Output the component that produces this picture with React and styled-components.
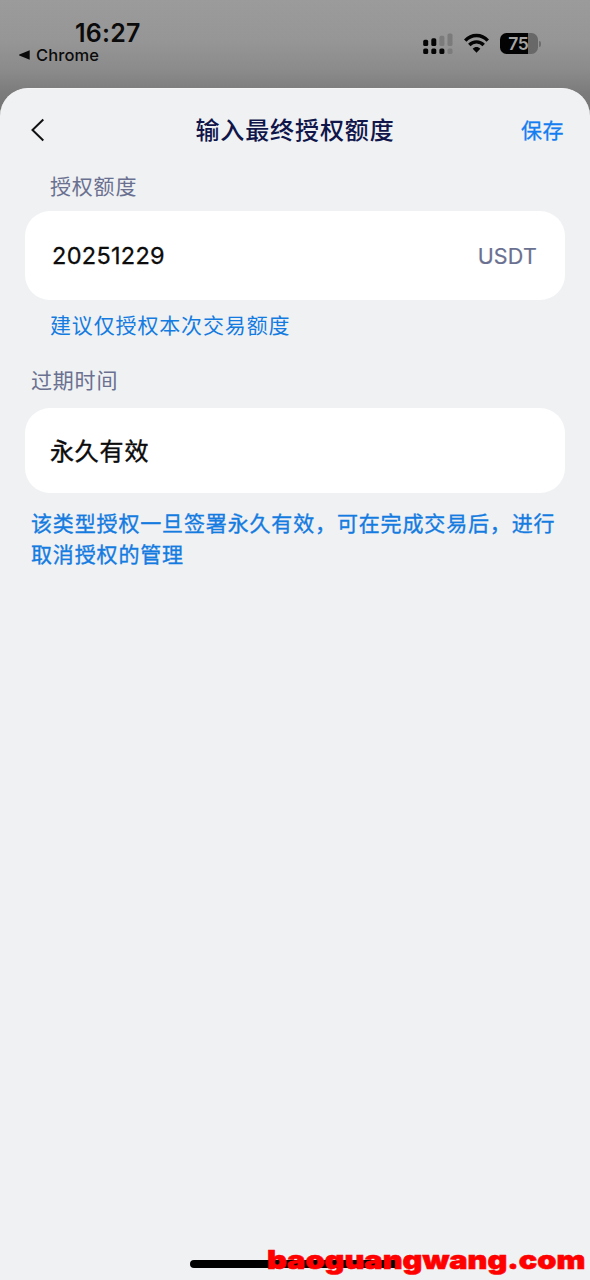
import styled, { createGlobalStyle } from "styled-components";

const GlobalStyle = createGlobalStyle`
  * {
    box-sizing: border-box;
  }

  body {
    margin: 0;
    background: #848484;
    font-family: Inter, "Noto Sans CJK SC", sans-serif;
  }
`;

const Screen = styled.div`
  position: relative;
  width: 590px;
  height: 1280px;
  display: flex;
  flex-direction: column;
  overflow: hidden;
  background: linear-gradient(#9b9b9b 0, #969696 40px, #8b8b8b 70px, #7c7c7c 92px, #707070 120px);
`;

const StatusBar = styled.div`
  height: 88px;
  flex: none;
  display: flex;
  justify-content: space-between;
  padding: 18px 49px 0 19px;
`;

const TimeBlock = styled.div`
  display: flex;
  flex-direction: column;
  color: #0b0b0b;
`;

const Time = styled.div`
  padding-left: 56px;
  font-size: 25px;
  line-height: 30px;
  font-weight: 600;
  letter-spacing: 0.2px;
`;

const BackToApp = styled.div`
  display: flex;
  align-items: center;
  gap: 6px;
  margin-top: -1px;
  font-size: 16.5px;
  line-height: 16px;
  font-weight: 500;
  letter-spacing: 0.1px;
`;

const StatusIcons = styled.div`
  display: flex;
  align-items: flex-start;
  padding-top: 15px;
`;

const Battery = styled.div`
  display: flex;
  align-items: center;
  margin-left: 11px;
`;

const BatteryBody = styled.div`
  width: 38px;
  height: 21px;
  border-radius: 6.5px;
  background: linear-gradient(to right, #030303 28px, #686868 28px);
  color: #a5a5a5;
  font-size: 17.5px;
  line-height: 21px;
  font-weight: 600;
  text-align: center;
  letter-spacing: -0.5px;
  text-indent: -1.5px;
`;

const BatteryTip = styled.div`
  width: 2px;
  height: 6px;
  margin-left: 1px;
  border-radius: 0 2px 2px 0;
  background: #6d6d6d;
`;

const Sheet = styled.div`
  flex: 1;
  padding: 0 25px;
  border-radius: 28px 28px 0 0;
  background: #eff1f3;
  border-top: 1px solid #f6f6f7;
`;

const Header = styled.div`
  height: 83px;
  display: grid;
  grid-template-columns: 80px 1fr 80px;
  align-items: center;
`;

const BackButton = styled.button`
  display: flex;
  padding: 0 0 2px 5px;
  border: 0;
  background: none;
`;

const Title = styled.div`
  text-align: center;
  font-size: 24px;
  line-height: 30px;
  font-weight: 500;
  letter-spacing: 0.9px;
  color: #10154a;
`;

const SaveButton = styled.button`
  padding: 0 1px 0 0;
  border: 0;
  background: none;
  text-align: right;
  font-family: inherit;
  font-size: 21px;
  line-height: 30px;
  font-weight: 400;
  -webkit-text-stroke: 0.3px;
  letter-spacing: 0.5px;
  color: #147df0;
`;

const Label = styled.div`
  padding-left: ${(props) => (props.$inset ? 25 : 6)}px;
  font-size: 21px;
  line-height: 30px;
  letter-spacing: 0.8px;
  color: #6a7090;
`;

const Card = styled.div`
  height: ${(props) => props.$height}px;
  display: flex;
  align-items: center;
  justify-content: space-between;
  margin-top: ${(props) => props.$top}px;
  padding: 0 28px 0 25px;
  border-radius: 25px;
  background: #fff;
  color: #0c0c0c;
`;

const Amount = styled.div`
  padding-left: 2px;
  font-size: 23.5px;
  font-weight: 400;
  -webkit-text-stroke: 0.3px;
  letter-spacing: 0.3px;
`;

const Unit = styled.div`
  font-size: 21.5px;
  font-weight: 400;
  -webkit-text-stroke: 0.2px;
  letter-spacing: 0.2px;
  color: #6a7090;
`;

const Expiry = styled.div`
  padding-bottom: 2px;
  font-size: 24px;
  font-weight: 400;
  -webkit-text-stroke: 0.4px;
  letter-spacing: 0.8px;
`;

const Hint = styled.div`
  margin: ${(props) => props.$margin};
  padding-left: ${(props) => (props.$inset ? 25 : 6)}px;
  font-size: 21px;
  line-height: 31px;
  -webkit-text-stroke: ${(props) => (props.$inset ? 0 : 0.35)}px;
  letter-spacing: 0.85px;
  white-space: nowrap;
  color: #147be0;
`;

const HomeIndicator = styled.div`
  position: absolute;
  left: 190px;
  bottom: 12px;
  width: 210px;
  height: 8px;
  border-radius: 4px;
  background: #000;
`;

const Watermark = styled.div`
  position: absolute;
  left: 267px;
  bottom: 5px;
  font-size: 26px;
  line-height: 30px;
  font-weight: 900;
  color: #fe0000;
  -webkit-text-stroke: 0.6px #fe0000;
  white-space: nowrap;
  transform: scaleX(1.18);
  transform-origin: left;
`;

const SignalIcon = () => (
  <svg width="31" height="22" viewBox="0 0 31 22" fill="#050505">
    <rect x="0.2" y="6.8" width="5" height="6.2" rx="1.6" />
    <rect x="8.3" y="5.3" width="5" height="7.7" rx="1.6" />
    <rect x="16.4" y="2.8" width="5" height="10.2" rx="1.6" fill="#7b7b7b" />
    <rect x="24.5" y="0.5" width="5" height="12.5" rx="1.6" fill="#7b7b7b" />
    <rect x="0.2" y="15.5" width="5" height="5.6" rx="1.6" />
    <rect x="8.3" y="15.5" width="5" height="5.6" rx="1.6" />
    <rect x="16.4" y="15.5" width="5" height="5.6" rx="1.6" />
    <rect x="24.5" y="15.5" width="5" height="5.6" rx="1.6" fill="#7b7b7b" />
  </svg>
);

const Wifi = styled.svg`
  margin-left: 10px;
`;

const WifiIcon = () => (
  <Wifi width="25" height="21" viewBox="0 0 25 21" fill="none">
    <path d="M1.2 7.6 C7.4 0.8 17.6 0.8 23.8 7.6" stroke="#050505" strokeWidth="3.4" />
    <path d="M5.3 12 C9.2 7.9 15.8 7.9 19.7 12" stroke="#050505" strokeWidth="3.3" />
    <path d="M8.7 15.7 C10.8 13.4 14.2 13.4 16.3 15.7 L12.5 19.7 Z" fill="#050505" />
  </Wifi>
);

const App = () => {
  return (
    <>
      <GlobalStyle />
      <Screen>
        <StatusBar>
          <TimeBlock>
            <Time>16:27</Time>
            <BackToApp>
              <svg width="11" height="10" viewBox="0 0 11 10">
                <path d="M10.7 0.2 V9.8 L0.3 5.4 Q-0.2 5 0.3 4.6 Z" fill="#0b0b0b" />
              </svg>
              Chrome
            </BackToApp>
          </TimeBlock>
          <StatusIcons>
            <SignalIcon />
            <WifiIcon />
            <Battery>
              <BatteryBody>75</BatteryBody>
              <BatteryTip />
            </Battery>
          </StatusIcons>
        </StatusBar>
        <Sheet>
          <Header>
            <BackButton>
              <svg width="16" height="24" viewBox="0 0 16 24" fill="none">
                <path d="M13.3 1.5 L2.5 12 L13.3 22.5" stroke="#111" strokeWidth="2" />
              </svg>
            </BackButton>
            <Title>输入最终授权额度</Title>
            <SaveButton>保存</SaveButton>
          </Header>
          <Label $inset>授权额度</Label>
          <Card $height={89} $top={9}>
            <Amount>20251229</Amount>
            <Unit>USDT</Unit>
          </Card>
          <Hint $inset $margin="10px 0 25px">建议仅授权本次交易额度</Hint>
          <Label>过期时间</Label>
          <Card $height={85} $top={12}>
            <Expiry>永久有效</Expiry>
          </Card>
          <Hint $margin="15px 0 0">
            该类型授权一旦签署永久有效，可在完成交易后，进行
            <br />
            取消授权的管理
          </Hint>
        </Sheet>
        <HomeIndicator />
        <Watermark>baoguangwang.com</Watermark>
      </Screen>
    </>
  );
};

export default App;
